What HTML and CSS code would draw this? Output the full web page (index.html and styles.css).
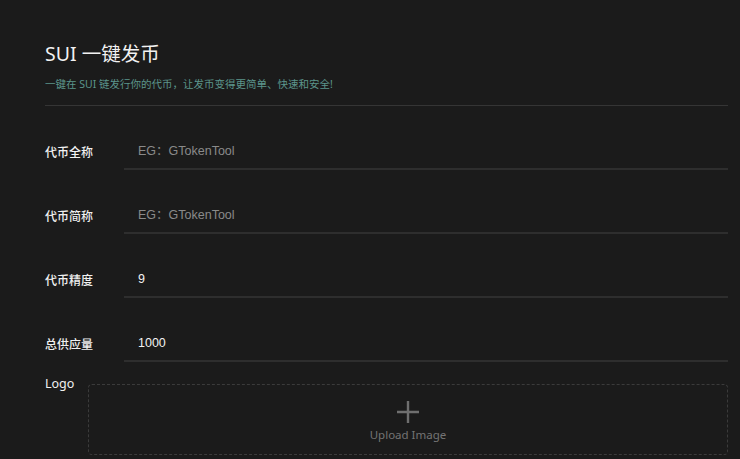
FILE: index.html
```html
<!DOCTYPE html>
<html lang="zh-CN">
<head>
<meta charset="utf-8">
<title>SUI 一键发币</title>
<link rel="stylesheet" href="styles.css">
</head>
<body>
<main class="page">
  <header class="head">
    <h1 class="title">SUI 一键发币</h1>
    <p class="sub">一键在 SUI 链发行你的代币，让发币变得更简单、快速和安全!</p>
  </header>
  <form class="form">
    <div class="row">
      <label class="label">代币全称</label>
      <div class="field"><span class="ph">EG：GTokenTool</span></div>
    </div>
    <div class="row">
      <label class="label">代币简称</label>
      <div class="field"><span class="ph">EG：GTokenTool</span></div>
    </div>
    <div class="row">
      <label class="label">代币精度</label>
      <div class="field"><span class="val">9</span></div>
    </div>
    <div class="row">
      <label class="label">总供应量</label>
      <div class="field"><span class="val">1000</span></div>
    </div>
    <div class="logo-row">
      <label class="logo-label">Logo</label>
      <div class="upload">
        <svg class="plus" width="24" height="24" viewBox="0 0 24 24"><path d="M12 1v22M1 12h22" stroke="#6f6f6f" stroke-width="2.4" fill="none"/></svg>
        <span class="up-text">Upload Image</span>
      </div>
    </div>
  </form>
</main>
</body>
</html>
```
FILE: styles.css
```css
html, body {
  margin: 0;
  padding: 0;
  background: #1b1b1b;
  height: 100%;
  overflow: hidden;
}
.page {
  padding: 40px 12px 0 45px;
  font-family: "Noto Sans", "Noto Sans CJK SC", sans-serif;
  color: #fff;
}
.head {
  border-bottom: 1px solid #353535;
  padding-bottom: 14px;
}
.title {
  margin: 0;
  font-size: 19.5px;
  font-weight: 400;
  line-height: 28px;
  color: #f2f2f2;
}
.sub {
  margin: 9px 0 0;
  font-size: 10.5px;
  line-height: 14px;
  color: #5b958b;
}
.form {
  display: flex;
  flex-direction: column;
}
.row {
  display: flex;
  align-items: center;
  margin-top: 24px;
}
.label {
  width: 79px;
  flex: none;
  font-family: "Noto Sans CJK SC", sans-serif;
  font-size: 12px;
  font-weight: 500;
  color: #f0f0f0;
  padding-top: 3px;
}
.field {
  flex: 1;
  height: 38px;
  border-bottom: 2px solid #2e2e2e;
  padding-left: 14px;
  display: flex;
  align-items: center;
  font-family: "Liberation Sans", "Noto Sans CJK SC", sans-serif;
  font-size: 12.5px;
}
.ph { color: #8a8a8a; }
.val { color: #f2f2f2; padding-top: 4px; }
.logo-row {
  display: flex;
  align-items: flex-start;
  margin-top: 14px;
}
.logo-label {
  width: 43px;
  flex: none;
  font-size: 12.5px;
  color: #f0f0f0;
  line-height: 16px;
}
.upload {
  flex: 1;
  margin-top: 8px;
  height: 69px;
  border: 1px dashed #3b3b3b;
  border-radius: 4px;
  display: flex;
  flex-direction: column;
  align-items: center;
  justify-content: center;
  gap: 3px;
}
.plus { display: block; margin-top: 3px; }
.up-text {
  font-size: 11.5px;
  color: #747474;
}
```
